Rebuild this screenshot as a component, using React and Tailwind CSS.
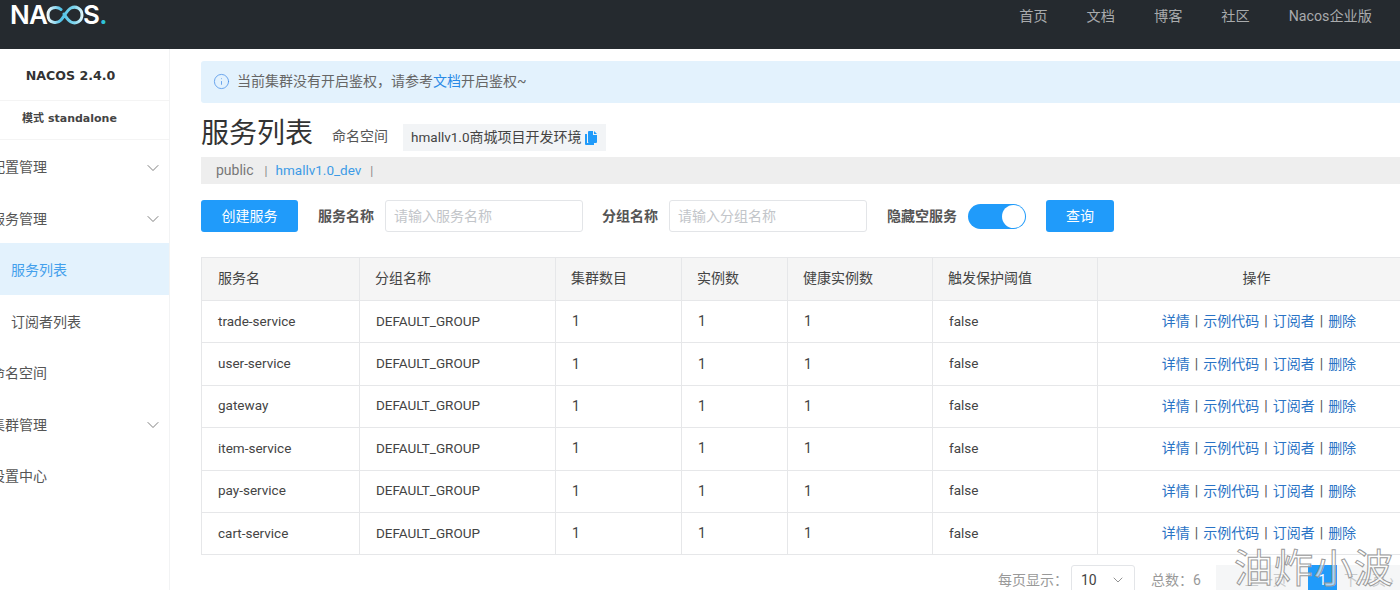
import { ChevronDown, Info } from 'lucide-react'

const MENU = [
  { label: '配置管理', arrow: true },
  { label: '服务管理', arrow: true },
  { label: '服务列表', sub: true, active: true },
  { label: '订阅者列表', sub: true },
  { label: '命名空间' },
  { label: '集群管理', arrow: true },
  { label: '设置中心' },
]

const NAV = ['首页', '文档', '博客', '社区', 'Nacos企业版']

const COLUMNS = [
  ['服务名', 'w-[158px] pl-4'],
  ['分组名称', 'w-[196px] pl-[15px]'],
  ['集群数目', 'w-[126px] pl-[15px]'],
  ['实例数', 'w-[106px] pl-[15px]'],
  ['健康实例数', 'w-[145px] pl-[15px]'],
  ['触发保护阈值', 'w-[165px] pl-[15px]'],
  ['操作', 'w-[319px] pl-[15px]'],
]

const SERVICES = ['trade-service', 'user-service', 'gateway', 'item-service', 'pay-service', 'cart-service']

function Logo() {
  return (
    <div className="flex items-center text-[26px] leading-none font-semibold tracking-[-0.8px] text-white font-['Inter',sans-serif]">
      <span>NA</span>
      <svg width="38" height="20" viewBox="0 0 38 20" fill="none" className="mx-[-1px]">
        <defs>
          <linearGradient id="logoInfinity" x1="0" y1="0" x2="38" y2="0" gradientUnits="userSpaceOnUse">
            <stop offset="0" stopColor="#ffffff" />
            <stop offset="0.4" stopColor="#4fc0e6" />
            <stop offset="0.75" stopColor="#7fd6ee" />
            <stop offset="1" stopColor="#eefafd" />
          </linearGradient>
        </defs>
        <path
          d="M15 4.5 C12 1.5 2 1 2 10 C2 19 12 18.5 15 15 C19 10.5 21 5 25 3 C30 0.5 36 4 36 10 C36 16 30 19.5 25 17 C22 15.5 20 12 18 9"
          stroke="url(#logoInfinity)"
          strokeWidth="3"
          strokeLinecap="round"
        />
      </svg>
      <span>S</span>
      <span className="text-[#2fc3d8]">.</span>
    </div>
  )
}

function CopyIcon() {
  return (
    <svg width="12" height="14" viewBox="0 0 12 14" fill="#209bfa">
      <path d="M0 3h2v9h7v2H1a1 1 0 0 1-1-1z" />
      <path d="M3 1a1 1 0 0 1 1-1h4v4h4v7a1 1 0 0 1-1 1H4a1 1 0 0 1-1-1z" />
      <path d="M9 0l3 3H9z" />
    </svg>
  )
}

function Sidebar() {
  return (
    <aside className="w-[170px] shrink-0 border-r border-[#f2f3f4] text-[14px] text-[#555]">
      <div className="flex h-[52px] items-center justify-center border-b border-[#f4f4f4] pt-[3px] pr-[28px] text-[12.6px] font-bold text-[#333] font-['DejaVu_Sans','Noto_Sans_CJK_SC',sans-serif]">
        NACOS 2.4.0
      </div>
      <div className="flex h-[39px] items-center justify-center border-b border-[#f4f4f4] pr-[30px] pb-[2px] text-[11px] font-bold text-[#444] font-['DejaVu_Sans','Noto_Sans_CJK_SC',sans-serif]">
        模式 standalone
      </div>
      <nav className="overflow-hidden">
        {MENU.map((item) => (
          <div
            key={item.label}
            className={`flex h-[51.5px] items-center justify-between pt-[4px] pr-[6px] ${item.active ? 'bg-[#e3f2fd] text-[#43a0ec]' : ''} ${item.sub ? 'pl-[11px]' : '-ml-[9px]'}`}
          >
            <span>{item.label}</span>
            {item.arrow && <ChevronDown size={20} strokeWidth={1} className="text-[#666]" />}
          </div>
        ))}
      </nav>
    </aside>
  )
}

function Field({ label, placeholder }) {
  return (
    <div className="flex shrink-0 items-center gap-[11px]">
      <span className="text-[14px] font-bold text-[#555]">{label}</span>
      <div className="flex h-[32px] w-[198px] items-center rounded-[3px] border border-[#e3e5e8] pl-[8px] text-[14px] text-[#c2c5c9]">
        {placeholder}
      </div>
    </div>
  )
}

function ServiceTable() {
  const cell = 'border border-[#e6e7e9] pr-4 pl-4'
  const latin = `${cell} pb-[2px] text-[13.5px]`

  return (
    <table className="mt-[25px] w-[1215px] table-fixed border-collapse text-[14px] text-[#444]">
      <thead>
        <tr className="h-[43px] bg-[#f5f5f5]">
          {COLUMNS.map(([title, width], index) => (
            <th
              key={title}
              className={`border border-[#e6e7e9] pr-4 pb-[2px] font-normal ${width} ${index === 6 ? 'text-center' : 'text-left'}`}
            >
              {title}
            </th>
          ))}
        </tr>
      </thead>
      <tbody>
        {SERVICES.map((name) => (
          <tr key={name} className="h-[42.4px]">
            <td className={latin}>{name}</td>
            <td className={latin}>DEFAULT_GROUP</td>
            <td className={cell}>1</td>
            <td className={cell}>1</td>
            <td className={cell}>1</td>
            <td className={latin}>false</td>
            <td className={`${cell} text-center text-[#2a73c5]`}>
              <span className="inline-flex gap-[5px] pl-[4px]">
                <span>详情</span>
                <span className="text-[#555]">|</span>
                <span>示例代码</span>
                <span className="text-[#555]">|</span>
                <span>订阅者</span>
                <span className="text-[#555]">|</span>
                <span>删除</span>
              </span>
            </td>
          </tr>
        ))}
      </tbody>
    </table>
  )
}

function Pagination() {
  return (
    <div className="mt-[10px] flex w-[1300px] items-center whitespace-nowrap text-[14px] text-[#999]">
      <span className="ml-[797px] shrink-0">每页显示：</span>
      <div className="ml-[3px] flex h-[30px] w-[64px] shrink-0 items-center justify-between rounded-[3px] border border-[#e3e5e8] pr-[8px] pl-[9px] text-[#444]">
        10
        <ChevronDown size={16} strokeWidth={1.2} className="text-[#777]" />
      </div>
      <span className="ml-[16px] shrink-0">总数：6</span>
      <div className="ml-[15px] flex h-[30px] shrink-0 items-center bg-[#f5f6f7] text-[#c8cacc]">
        <span className="w-[92px] text-center">‹ 上一页</span>
        <span className="flex h-[30px] w-[29px] items-center justify-center bg-[#209bfa] text-white">1</span>
        <span className="w-[64px] text-center">下一页 ›</span>
      </div>
    </div>
  )
}

export default function App() {
  return (
    <div className="relative h-[590px] w-[1400px] overflow-hidden bg-white font-['Roboto','Noto_Sans_CJK_SC',sans-serif]">
      <header className="flex h-[49px] items-start justify-between bg-[#252a2f] pt-[2px] pr-[28px] pl-[10px]">
        <Logo />
        <div className="flex gap-[39px] pt-[3px] text-[14.2px] leading-[22px] text-[#a9abad]">
          {NAV.map((label) => (
            <span key={label}>{label}</span>
          ))}
        </div>
      </header>

      <div className="flex h-[541px]">
        <Sidebar />
        <main className="min-w-0 flex-1 pt-[12px] pl-[31px]">
          <div className="flex h-[42px] w-[1230px] items-center gap-[7px] rounded-[3px] bg-[#e3f2fd] pb-[2px] pl-[12px] text-[14px] text-[#666]">
            <Info size={17} strokeWidth={1.1} className="text-[#4a90e8]" />
            <span>
              当前集群没有开启鉴权，请参考<span className="text-[#2a8ae6]">文档</span>开启鉴权~
            </span>
          </div>

          <div className="mt-[10px] flex h-[44px] items-center">
            <h1 className="-mt-[3px] text-[28px] leading-none font-normal text-[#333]">服务列表</h1>
            <span className="mt-[3px] ml-[19px] text-[14px] text-[#555]">命名空间</span>
            <div className="mt-[5px] ml-[15px] flex h-[27px] items-center gap-[4px] bg-[#f2f4f6] pr-[9px] pl-[8px] text-[14px] text-[#444]">
              <span>
                <span className="text-[13.5px]">hmallv1.0</span>商城项目开发环境
              </span>
              <CopyIcon />
            </div>
          </div>

          <div className="flex h-[27px] w-[1230px] items-center bg-[#eeeeee] pl-[15px] text-[14px] text-[#777]">
            <span>public</span>
            <span className="mr-[8px] ml-[11px] text-[12px] text-[#888]">|</span>
            <span className="text-[13.5px] text-[#3d9be6]">hmallv1.0_dev</span>
            <span className="ml-[9px] text-[12px] text-[#888]">|</span>
          </div>

          <div className="mt-[16px] flex items-center">
            <button className="h-[32px] w-[97px] shrink-0 rounded-[3px] bg-[#209bfa] text-[14px] text-white">创建服务</button>
            <div className="ml-[20px]">
              <Field label="服务名称" placeholder="请输入服务名称" />
            </div>
            <div className="ml-[19px]">
              <Field label="分组名称" placeholder="请输入分组名称" />
            </div>
            <span className="ml-[20px] text-[14px] font-bold text-[#555]">隐藏空服务</span>
            <div className="ml-[11px] flex h-[25px] w-[58px] items-center justify-end rounded-full bg-[#209bfa] pr-[1px]">
              <div className="size-[23px] rounded-full bg-white" />
            </div>
            <button className="ml-[20px] h-[32px] w-[68px] rounded-[3px] bg-[#209bfa] text-[14px] text-white">查询</button>
          </div>

          <ServiceTable />
          <Pagination />
        </main>
      </div>

      <div className="absolute right-[6px] bottom-[1px] text-[39px] leading-none tracking-[1px] text-white/60 [-webkit-text-stroke:1px_#9a9a9a]">
        油炸小波
      </div>
    </div>
  )
}
